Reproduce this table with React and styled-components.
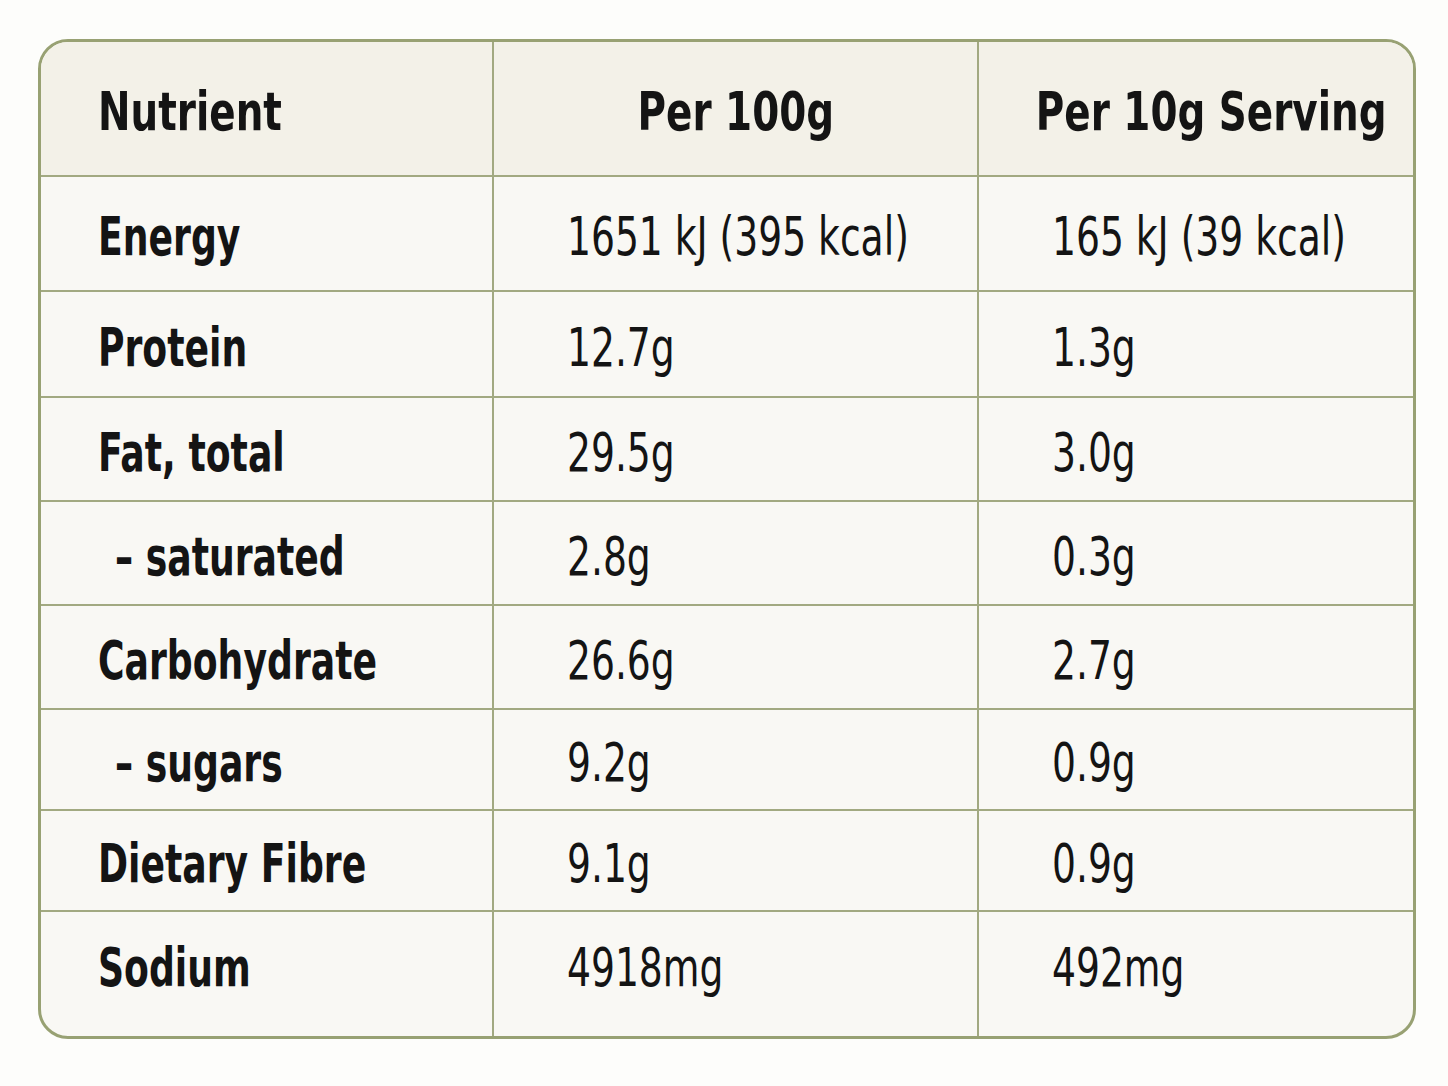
import React from "react";
import styled, { createGlobalStyle } from "styled-components";

const GlobalStyle = createGlobalStyle`
  html, body {
    margin: 0;
    background: #fdfdfb;
  }
  body {
    font-family: "DejaVu Sans Condensed", "Liberation Sans", sans-serif;
    color: #141414;
  }
`;

const Page = styled.div`
  width: 1448px;
  height: 1086px;
  padding: 39px 0 0 38px;
  box-sizing: border-box;
`;

const Table = styled.div`
  width: 1378px;
  box-sizing: border-box;
  border: 3px solid #98a173;
  border-radius: 30px;
  overflow: hidden;
  background: #f9f8f4;
  display: grid;
  grid-template-columns: 453px 485px 1fr;
`;

const Cell = styled.div`
  height: ${p => p.h}px;
  box-sizing: border-box;
  display: flex;
  align-items: center;
  justify-content: ${p => (p.center ? "center" : "flex-start")};
  padding-left: ${p => (p.center ? p.shift || 0 : p.pad)}px;
  padding-top: ${p => (p.lift ? 0 : 6)}px;
  padding-bottom: ${p => p.lift || 0}px;
  border-right: ${p => (p.last ? "none" : "2px solid #a2a981")};
  border-bottom: ${p => (p.end ? "none" : "2px solid #a2a981")};
  background: ${p => (p.head ? "#f3f1e8" : "transparent")};
  font-size: 54px;
  font-weight: ${p => (p.bold ? 700 : 400)};
  white-space: nowrap;
`;

/* the reference face is much narrower than DejaVu Condensed */
const Text = styled.span`
  display: inline-block;
  transform: scaleX(${p => (p.bold ? 0.745 : 0.775)});
  transform-origin: ${p => (p.center ? "center" : "left")} center;
`;

const HeadText = styled(Text)`
  transform: scaleX(0.8);
`;

const rows = [
  { name: "Energy", a: "1651 kJ (395 kcal)", b: "165 kJ (39 kcal)", h: 115 },
  { name: "Protein", a: "12.7g", b: "1.3g", h: 106 },
  { name: "Fat, total", a: "29.5g", b: "3.0g", h: 104 },
  { name: "– saturated", a: "2.8g", b: "0.3g", h: 104, sub: true },
  { name: "Carbohydrate", a: "26.6g", b: "2.7g", h: 104 },
  { name: "– sugars", a: "9.2g", b: "0.9g", h: 101, sub: true },
  { name: "Dietary Fibre", a: "9.1g", b: "0.9g", h: 101 },
  { name: "Sodium", a: "4918mg", b: "492mg", h: 124, lift: 14 },
];

export default function App() {
  return (
    <Page>
      <GlobalStyle />
      <Table>
        <Cell head bold h={135} pad={57}><HeadText bold>Nutrient</HeadText></Cell>
        <Cell head bold center h={135}><HeadText bold center>Per 100g</HeadText></Cell>
        <Cell head bold center last shift={12} h={135}><HeadText bold center>Per 10g Serving</HeadText></Cell>
        {rows.map((r, i) => {
          const end = i === rows.length - 1;
          return (
            <React.Fragment key={r.name}>
              <Cell bold h={r.h} pad={r.sub ? 74 : 57} lift={r.lift} end={end}><Text bold>{r.name}</Text></Cell>
              <Cell h={r.h} pad={73} lift={r.lift} end={end}><Text>{r.a}</Text></Cell>
              <Cell h={r.h} pad={73} lift={r.lift} last end={end}><Text>{r.b}</Text></Cell>
            </React.Fragment>
          );
        })}
      </Table>
    </Page>
  );
}
